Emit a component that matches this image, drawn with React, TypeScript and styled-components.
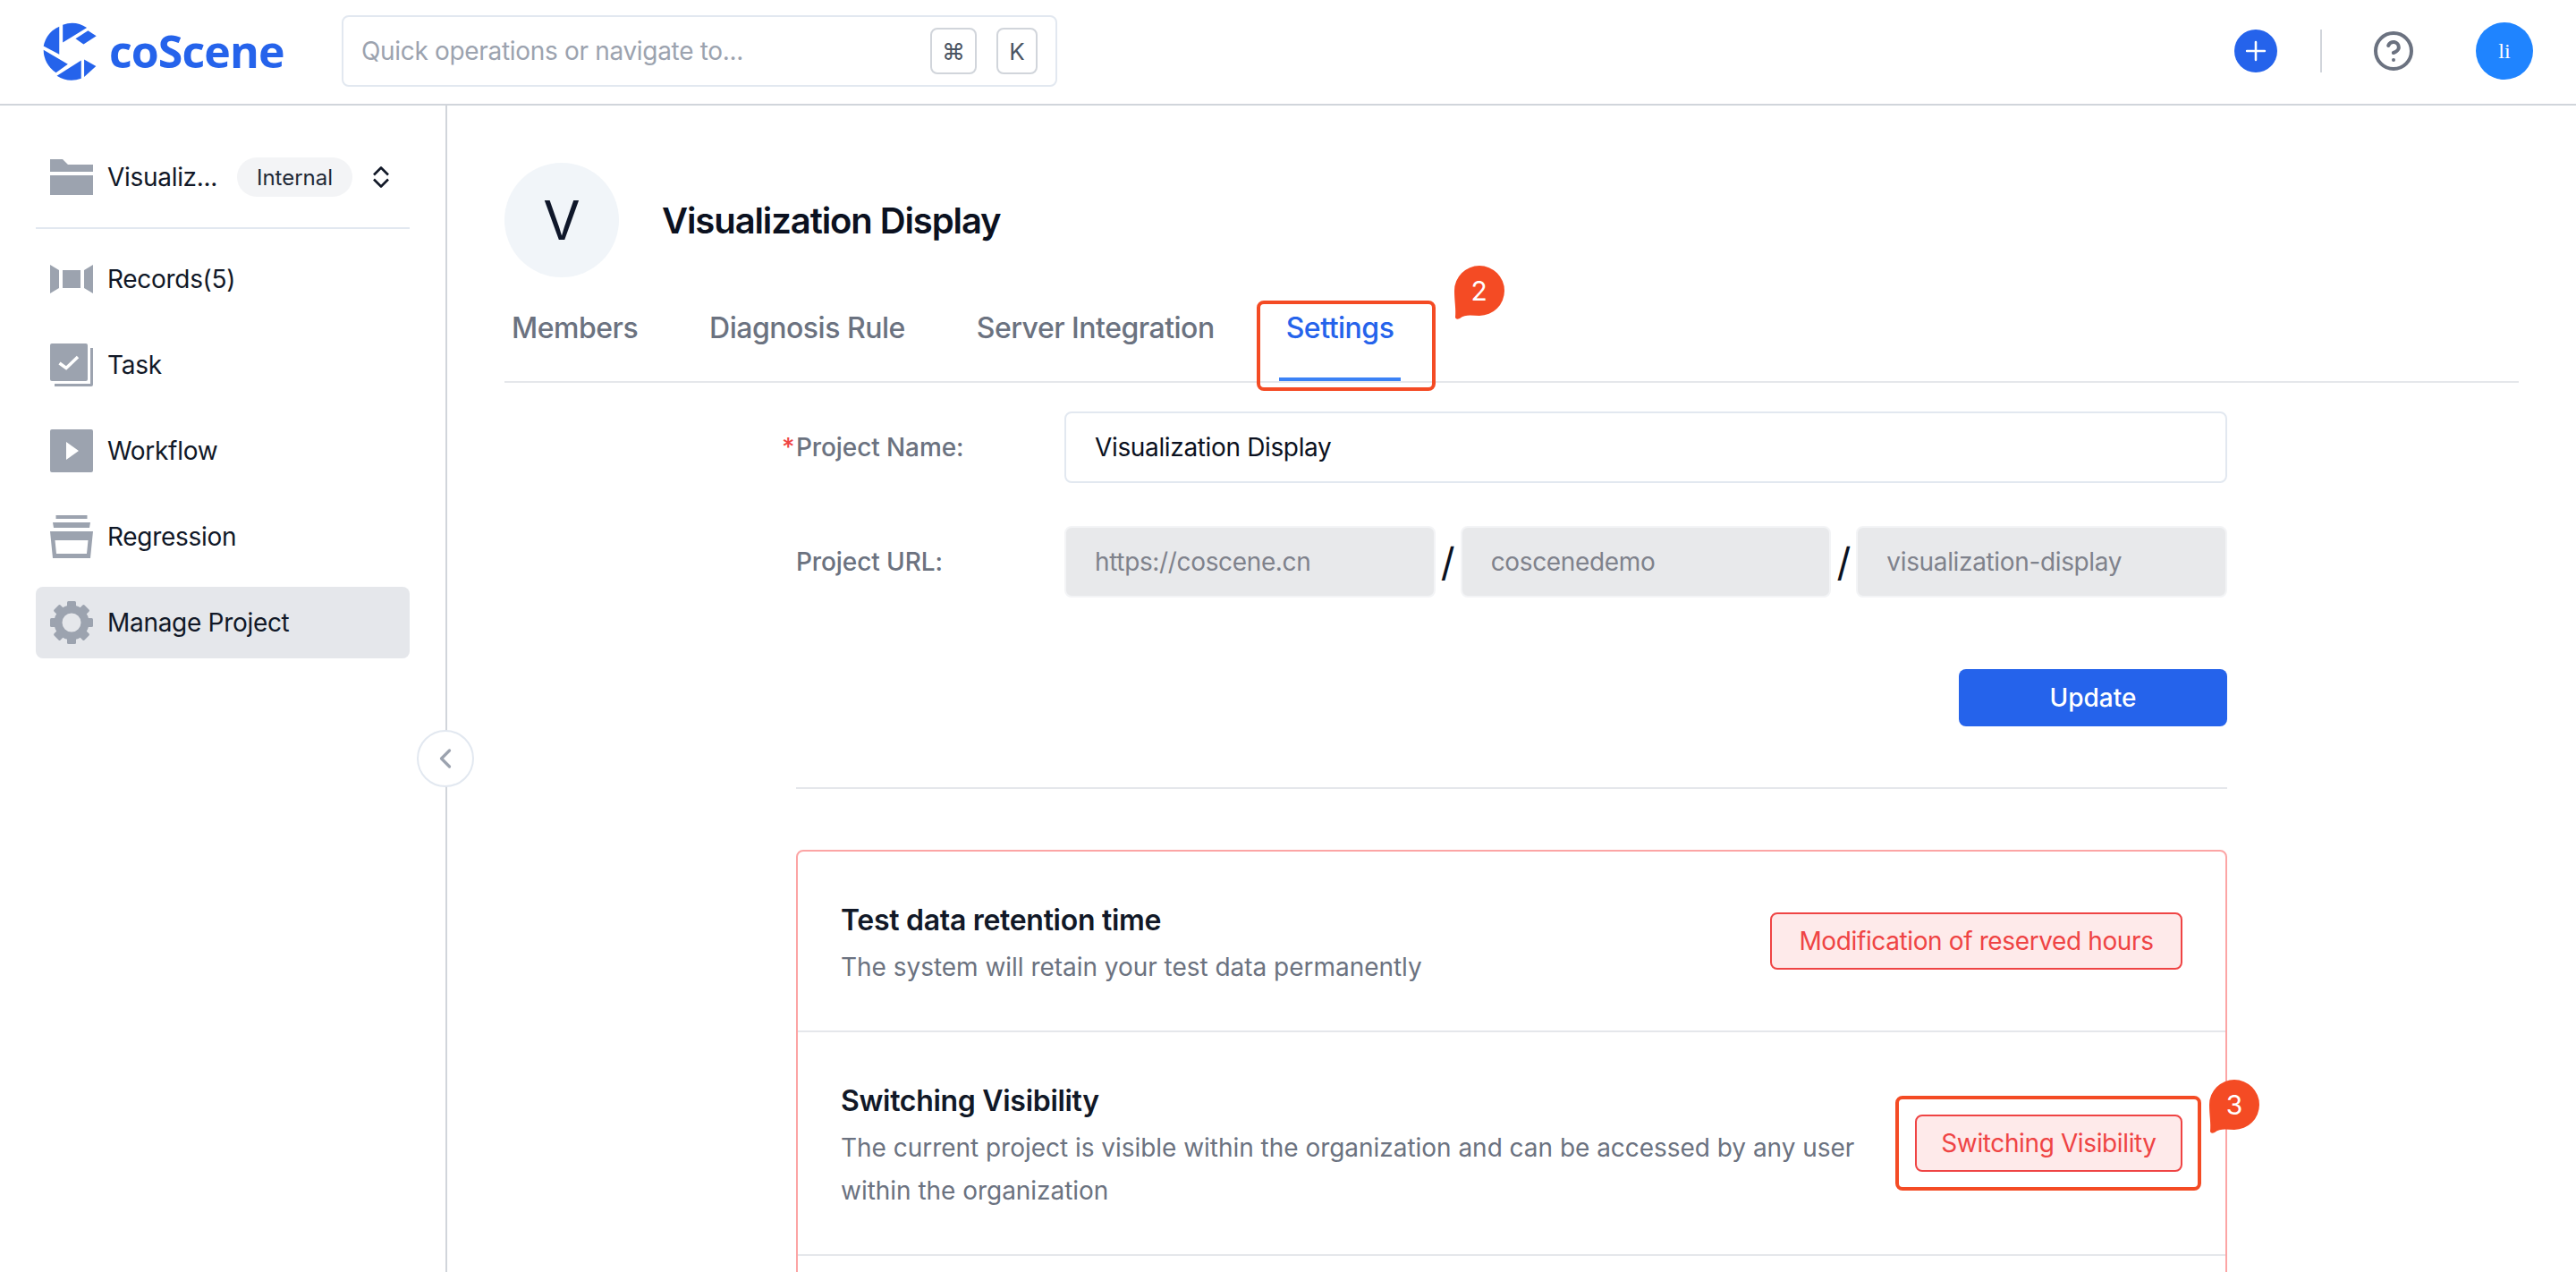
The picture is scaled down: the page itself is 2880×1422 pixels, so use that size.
import React from 'react';
import styled, { createGlobalStyle } from 'styled-components';
import { ChevronLeft, CircleHelp, Plus } from 'lucide-react';

const GlobalStyle = createGlobalStyle`
  * { box-sizing: border-box; }
  html, body { margin: 0; padding: 0; background: #fff; }
  body { font-family: Inter, "Noto Sans", sans-serif; color: #111827; }
`;

const Page = styled.div`
  height: 1422px;
  overflow: hidden;
  display: flex;
  flex-direction: column;
`;

const Header = styled.header`
  flex: none;
  height: 118px;
  display: flex;
  align-items: center;
  padding: 0 48px 2px 47px;
  border-bottom: 2px solid #d1d5db;
`;

const Brand = styled.div`
  width: 335px;
  display: flex;
  align-items: center;
  gap: 12px;
`;

const BrandName = styled.span`
  font-family: "Open Sans", sans-serif;
  font-size: 50px;
  font-weight: 700;
  letter-spacing: -0.9px;
  line-height: 1;
  color: #2563eb;
`;

const Search = styled.div`
  width: 800px;
  height: 80px;
  display: flex;
  align-items: center;
  gap: 22px;
  padding: 0 20px;
  border: 2px solid #e2e8f0;
  border-radius: 8px;
`;

const SearchHint = styled.span`
  flex: 1;
  font-size: 28px;
  letter-spacing: -0.32px;
  color: #9ca3af;
`;

const Key = styled.span<{ $w: number }>`
  width: ${({ $w }) => $w}px;
  height: 52px;
  display: flex;
  align-items: center;
  justify-content: center;
  border: 2px solid #d1d5db;
  border-radius: 8px;
  font-size: 26px;
  color: #4b5563;
  font-family: Inter, "DejaVu Sans", sans-serif;
`;

const HeaderRight = styled.div`
  margin-left: auto;
  display: flex;
  align-items: center;
`;

const AddButton = styled.span`
  width: 48px;
  height: 48px;
  border-radius: 50%;
  background: #2563eb;
  color: #fff;
  display: flex;
  align-items: center;
  justify-content: center;
`;

const HeaderRule = styled.span`
  width: 2px;
  height: 48px;
  margin: 0 56px 0 48px;
  background: #d1d5db;
`;

const UserAvatar = styled.span`
  width: 64px;
  height: 64px;
  margin-left: 68px;
  border-radius: 50%;
  background: #1f84ff;
  color: #fff;
  display: flex;
  align-items: center;
  justify-content: center;
  font-family: "Liberation Serif", serif;
  font-size: 24px;
`;

const Body = styled.div`
  flex: 1;
  display: flex;
  min-height: 0;
`;

const Sidebar = styled.aside`
  position: relative;
  flex: none;
  width: 500px;
  padding: 40px 40px 0;
  border-right: 2px solid #d1d5db;
`;

const ProjectRow = styled.div`
  height: 80px;
  display: flex;
  align-items: center;
  padding-left: 16px;
`;

const IconSlot = styled.span`
  flex: none;
  width: 48px;
  height: 48px;
  display: flex;
  align-items: center;
  justify-content: center;
`;

const ProjectName = styled.span`
  width: 145px;
  margin-left: 16px;
  font-size: 28px;
  letter-spacing: -0.3px;
`;

const Badge = styled.span`
  width: 129px;
  height: 44px;
  margin-right: 8px;
  display: flex;
  align-items: center;
  justify-content: center;
  border-radius: 22px;
  background: #f3f4f6;
  font-size: 24px;
  color: #1f2937;
`;

const SideRule = styled.div`
  height: 2px;
  margin: 16px 0;
  background: #e2e8f0;
`;

const NavList = styled.nav`
  display: flex;
  flex-direction: column;
  gap: 16px;
`;

const NavItem = styled.div<{ $active?: boolean }>`
  height: 80px;
  display: flex;
  align-items: center;
  gap: 16px;
  padding: 0 16px;
  border-radius: 8px;
  font-size: 28px;
  letter-spacing: -0.3px;
  background: ${({ $active }) => ($active ? '#e5e7eb' : 'transparent')};
`;

const CollapseButton = styled.span`
  position: absolute;
  top: 698px;
  right: -32px;
  width: 64px;
  height: 64px;
  border: 2px solid #e2e8f0;
  border-radius: 50%;
  background: #fff;
  color: #9ca3af;
  display: flex;
  align-items: center;
  justify-content: center;
`;

const Main = styled.main`
  flex: 1;
  min-width: 0;
  padding: 64px 64px 0;
`;

const ProjectHead = styled.div`
  display: flex;
  align-items: center;
  gap: 48px;
`;

const ProjectAvatar = styled.div`
  width: 128px;
  height: 128px;
  border-radius: 50%;
  background: #f1f5f9;
  display: flex;
  align-items: center;
  justify-content: center;
  font-size: 60px;
  color: #0f172a;
`;

const ProjectTitle = styled.h1`
  margin: 0;
  font-size: 40px;
  font-weight: 600;
  letter-spacing: -1.1px;
  color: #0b1120;
`;

const TabBar = styled.div`
  height: 118px;
  display: flex;
  gap: 64px;
  border-bottom: 2px solid #e5e7eb;
`;

const Tab = styled.div<{ $active?: boolean }>`
  position: relative;
  height: 116px;
  padding: 33px 8px 0;
  font-size: 32px;
  line-height: 48px;
  font-weight: 500;
  letter-spacing: -0.5px;
  color: ${({ $active }) => ($active ? '#2563eb' : '#6b7280')};
  border-bottom: 4px solid ${({ $active }) => ($active ? '#3b82f6' : 'transparent')};
`;

const Highlight = styled.span`
  position: absolute;
  border: 4px solid #f44b24;
  border-radius: 8px;
  pointer-events: none;
`;

const TabHighlight = styled(Highlight)`
  top: 26px;
  left: -25px;
  width: 200px;
  height: 101px;
`;

const ButtonHighlight = styled(Highlight)`
  inset: -23px -23px -23px -24px;
`;

const Pin = styled.span`
  position: absolute;
  width: 56px;
  height: 61px;
  display: flex;
  justify-content: center;
  padding-top: 9px;
  font-size: 30px;
  line-height: 38px;
  font-weight: 400;
  letter-spacing: 0;
  color: #fff;

  svg {
    position: absolute;
    inset: 0;
  }

  b {
    position: relative;
    font-weight: 400;
  }
`;

const TabPin = styled(Pin)`
  top: -13px;
  left: 196px;
`;

const ButtonPin = styled(Pin)`
  top: -41px;
  right: -88px;
`;

const Form = styled.div`
  width: 1600px;
  margin: 32px auto 0;
`;

const FormRow = styled.div`
  display: flex;
  align-items: center;
  margin-bottom: 48px;
`;

const FieldLabel = styled.label`
  position: relative;
  flex: none;
  width: 300px;
  font-size: 28px;
  font-weight: 500;
  letter-spacing: -0.1px;
  color: #6b7280;
`;

const Required = styled.span`
  position: absolute;
  left: -16px;
  top: 0;
  color: #ef4444;
`;

const Field = styled.div<{ $disabled?: boolean }>`
  flex: 1;
  height: 80px;
  display: flex;
  align-items: center;
  padding: 0 32px;
  border: 2px solid ${({ $disabled }) => ($disabled ? '#f3f4f6' : '#e2e8f0')};
  border-radius: 8px;
  font-size: 28px;
  letter-spacing: -0.35px;
  background: ${({ $disabled }) => ($disabled ? '#e8e9eb' : '#fff')};
  color: ${({ $disabled }) => ($disabled ? '#7f828c' : '#0b1120')};
`;

const Slash = styled.span`
  flex: none;
  width: 28px;
  text-align: center;
  font-size: 44px;
  line-height: 1;
  color: #0b1120;
`;

const Actions = styled.div`
  display: flex;
  justify-content: flex-end;
  margin-top: 80px;
`;

const PrimaryButton = styled.button`
  width: 300px;
  height: 64px;
  border: 0;
  border-radius: 8px;
  background: #2563eb;
  color: #fff;
  font: 500 28px Inter, sans-serif;
`;

const FormRule = styled.div`
  height: 2px;
  margin: 68px 0;
  background: #e5e7eb;
`;

const DangerCard = styled.section`
  border: 2px solid #fca5a5;
  border-radius: 8px;
`;

const DangerRow = styled.div`
  display: flex;
  align-items: center;
  justify-content: space-between;
  gap: 48px;
  padding: 48px;
  min-height: 200px;
  border-bottom: 2px solid #e5e7eb;
`;

const DangerText = styled.div`
  flex: 1;
  margin: 1px 0 -1px;
`;

const DangerTitle = styled.div`
  font-size: 32px;
  line-height: 56px;
  font-weight: 600;
  letter-spacing: -0.3px;
  color: #111827;
`;

const DangerDesc = styled.div`
  font-size: 28px;
  line-height: 48px;
  letter-spacing: -0.03px;
  color: #6b7280;
`;

const DangerButton = styled.button<{ $w: number }>`
  position: relative;
  flex: none;
  width: ${({ $w }) => $w}px;
  height: 64px;
  padding: 0;
  border: 2px solid #ef4444;
  border-radius: 8px;
  background: #feeaea;
  color: #ef4444;
  font: 400 28px Inter, sans-serif;
  letter-spacing: -0.38px;
`;

const Folder = () => (
  <svg width="48" height="40" viewBox="0 0 48 40" fill="#9ca3af">
    <path d="M0 0H14L20 6H48V14H0Z" />
    <path d="M0 18H48V40H0Z" />
  </svg>
);

const Records = () => (
  <svg width="48" height="32" viewBox="0 0 48 32" fill="#9ca3af">
    <path d="M0 0L10 6V26L0 32Z" />
    <rect x="14" y="6" width="20" height="20" />
    <path d="M38 6L48 0V32L38 26Z" />
  </svg>
);

const TaskIcon = () => (
  <svg width="48" height="48" viewBox="0 0 48 48" fill="#9ca3af">
    <rect width="42" height="42" rx="2" />
    <path d="M45 5H48V46A2 2 0 0 1 46 48H5V45H45Z" />
    <path d="M10.5 22L18 27.5L31 15" fill="none" stroke="#fff" strokeWidth="3.5" />
  </svg>
);

const WorkflowIcon = () => (
  <svg width="48" height="48" viewBox="0 0 48 48" fill="#9ca3af">
    <path fillRule="evenodd" d="M2 0H46A2 2 0 0 1 48 2V46A2 2 0 0 1 46 48H2A2 2 0 0 1 0 46V2A2 2 0 0 1 2 0ZM18 14V34L32 24Z" />
  </svg>
);

const RegressionIcon = () => (
  <svg width="48" height="48" viewBox="0 0 48 48" fill="#9ca3af">
    <rect x="6.5" width="35" height="4" />
    <path d="M3 8H45L44 14H4Z" />
    <path fillRule="evenodd" d="M0 18H48L45 48H3ZM5.5 28L7 43H41L42.5 28Z" />
  </svg>
);

const GearIcon = () => (
  <svg width="48" height="48" viewBox="0 0 48 48" fill="#9ca3af">
    {[0, 45, 90, 135, 180, 225, 270, 315].map((deg) => (
      <rect key={deg} x="19" y="0" width="10" height="10" rx="1.5" transform={`rotate(${deg} 24 24)`} />
    ))}
    <circle cx="24" cy="24" r="15" fill="none" stroke="#9ca3af" strokeWidth="9" />
  </svg>
);

const UpDown = () => (
  <svg width="18" height="24" viewBox="0 0 18 24" fill="none" stroke="#111827" strokeWidth="2.6" strokeLinejoin="round">
    <path d="M1 9.5L9 1.5L17 9.5" />
    <path d="M1 14.5L9 22.5L17 14.5" />
  </svg>
);

const Logo = () => (
  <svg width="63" height="67" viewBox="50 40 190 200" fill="#2563eb">
    <path d="M108 56A92 92 0 0 0 55 122L108 150Z" />
    <path d="M120 50A92 92 0 0 1 201 60L120 110Z" />
    <path d="M163 97L205 70L233 88L190 116Z" />
    <path d="M55 135L137 183L97 212A92 92 0 0 1 55 135Z" />
    <path d="M100 222L182 170V231A92 92 0 0 1 100 222Z" />
    <path d="M192 167L232 190L192 226Z" />
  </svg>
);

const PinShape = () => (
  <svg width="56" height="61" viewBox="0 0 56 61" fill="#f44b24">
    <path d="M28 0A28 28 0 1 1 28 56C20 56 12 54 6 59Q2 61 1 58C2 48 0 40 0 28A28 28 0 0 1 28 0Z" />
  </svg>
);

const navItems = [
  { icon: <Records />, label: 'Records(5)' },
  { icon: <TaskIcon />, label: 'Task' },
  { icon: <WorkflowIcon />, label: 'Workflow' },
  { icon: <RegressionIcon />, label: 'Regression' },
  { icon: <GearIcon />, label: 'Manage Project', active: true },
];

export default function App() {
  return (
    <Page>
      <GlobalStyle />
      <Header>
        <Brand>
          <Logo />
          <BrandName>coScene</BrandName>
        </Brand>
        <Search>
          <SearchHint>Quick operations or navigate to...</SearchHint>
          <Key $w={52}>⌘</Key>
          <Key $w={46}>K</Key>
        </Search>
        <HeaderRight>
          <AddButton>
            <Plus size={34} strokeWidth={1.8} />
          </AddButton>
          <HeaderRule />
          <CircleHelp size={48} strokeWidth={2} color="#6b7280" />
          <UserAvatar>li</UserAvatar>
        </HeaderRight>
      </Header>
      <Body>
        <Sidebar>
          <ProjectRow>
            <IconSlot>
              <Folder />
            </IconSlot>
            <ProjectName>Visualiz...</ProjectName>
            <Badge>Internal</Badge>
            <IconSlot>
              <UpDown />
            </IconSlot>
          </ProjectRow>
          <SideRule />
          <NavList>
            {navItems.map((item) => (
              <NavItem key={item.label} $active={item.active}>
                <IconSlot>{item.icon}</IconSlot>
                {item.label}
              </NavItem>
            ))}
          </NavList>
          <CollapseButton>
            <ChevronLeft size={36} strokeWidth={2.2} />
          </CollapseButton>
        </Sidebar>
        <Main>
          <ProjectHead>
            <ProjectAvatar>V</ProjectAvatar>
            <ProjectTitle>Visualization Display</ProjectTitle>
          </ProjectHead>
          <TabBar>
            <Tab>Members</Tab>
            <Tab>Diagnosis Rule</Tab>
            <Tab>Server Integration</Tab>
            <Tab $active>
              Settings
              <TabHighlight />
              <TabPin>
                <PinShape />
                <b>2</b>
              </TabPin>
            </Tab>
          </TabBar>
          <Form>
            <FormRow>
              <FieldLabel>
                <Required>*</Required>
                Project Name:
              </FieldLabel>
              <Field>Visualization Display</Field>
            </FormRow>
            <FormRow>
              <FieldLabel>Project URL:</FieldLabel>
              <Field $disabled>https://coscene.cn</Field>
              <Slash>/</Slash>
              <Field $disabled>coscenedemo</Field>
              <Slash>/</Slash>
              <Field $disabled>visualization-display</Field>
            </FormRow>
            <Actions>
              <PrimaryButton>Update</PrimaryButton>
            </Actions>
            <FormRule />
            <DangerCard>
              <DangerRow>
                <DangerText>
                  <DangerTitle>Test data retention time</DangerTitle>
                  <DangerDesc>The system will retain your test data permanently</DangerDesc>
                </DangerText>
                <DangerButton $w={461}>Modification of reserved hours</DangerButton>
              </DangerRow>
              <DangerRow>
                <DangerText>
                  <DangerTitle>Switching Visibility</DangerTitle>
                  <DangerDesc>
                    The current project is visible within the organization and can be accessed by any user within the organization
                  </DangerDesc>
                </DangerText>
                <DangerButton $w={299}>
                  Switching Visibility
                  <ButtonHighlight />
                  <ButtonPin>
                    <PinShape />
                    <b>3</b>
                  </ButtonPin>
                </DangerButton>
              </DangerRow>
              <DangerRow />
            </DangerCard>
          </Form>
        </Main>
      </Body>
    </Page>
  );
}
